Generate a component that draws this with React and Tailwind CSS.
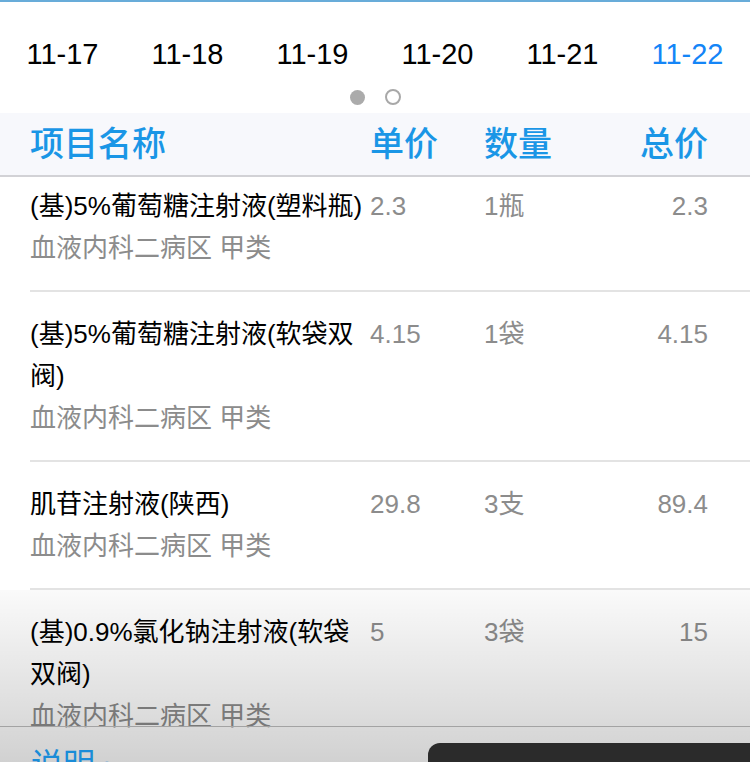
import React from 'react';

const dates = ['11-17', '11-18', '11-19', '11-20', '11-21', '11-22'];

const items = [
  { name: '(基)5%葡萄糖注射液(塑料瓶)', price: '2.3', qty: '1瓶', total: '2.3' },
  { name: '(基)5%葡萄糖注射液(软袋双阀)', price: '4.15', qty: '1袋', total: '4.15' },
  { name: '肌苷注射液(陕西)', price: '29.8', qty: '3支', total: '89.4' },
  { name: '(基)0.9%氯化钠注射液(软袋双阀)', price: '5', qty: '3袋', total: '15' },
];

const App = () => {
  return (
    <div className="relative h-[762px] w-[750px] overflow-hidden bg-white font-['Liberation_Sans','Noto_Sans_CJK_SC',sans-serif]">
      <div className="h-[2px] bg-[#68acd9]" />

      {/* date tabs */}
      <div className="flex pt-[30px]">
        {dates.map((d, i) => (
          <div
            key={d}
            className={`w-[125px] text-center text-[29px] leading-[44px] ${i === dates.length - 1 ? 'text-[#1485f7]' : 'text-black'}`}
          >
            {d}
          </div>
        ))}
      </div>

      {/* pager dots */}
      <div className="mt-[13px] mb-[8px] flex h-[16px] items-center justify-center gap-[20px]">
        <div className="h-[15px] w-[15px] rounded-full bg-[#ababab]" />
        <div className="h-[16px] w-[16px] rounded-full border-2 border-[#a8a8a8] bg-white" />
      </div>

      {/* table header */}
      <div className="grid h-[64px] grid-cols-[340px_114px_1fr_auto] items-center border-b-2 border-[#d2d2d6] bg-[#f7f8fc] pl-[30px] pr-[42px] text-[34px] font-medium text-[#1a96e6]">
        <div>项目名称</div>
        <div>单价</div>
        <div>数量</div>
        <div>总价</div>
      </div>

      {/* rows */}
      <div>
        {items.map((it, i) => (
          <div
            key={i}
            className={`ml-[30px] grid grid-cols-[340px_114px_1fr_auto] pr-[42px] pb-[21px] ${i === 0 ? 'pt-[8px]' : 'border-t-2 border-[#e3e3e3] pt-[21px]'}`}
          >
            <div>
              <div className="text-[26px] leading-[42px] text-black">{it.name}</div>
              <div className="text-[26px] leading-[42px] text-[#8c8c8c]">血液内科二病区 甲类</div>
            </div>
            <div className="text-[26px] leading-[42px] text-[#8c8c8c]">{it.price}</div>
            <div className="text-[26px] leading-[42px] text-[#8c8c8c]">{it.qty}</div>
            <div className="text-right text-[26px] leading-[42px] text-[#8c8c8c]">{it.total}</div>
          </div>
        ))}
      </div>

      {/* bottom fade */}
      <div className="pointer-events-none absolute inset-x-0 top-[590px] bottom-0 bg-gradient-to-b from-black/[0.02] to-black/[0.18]" />

      {/* bottom bar */}
      <div className="absolute inset-x-0 top-[726px] bottom-0 flex border-t border-[#a3a3a3]">
        <div className="flex-1 pl-[31px] pt-[18px] text-[32px] leading-[40px] text-[#1a8cd8]">说明 ›</div>
        <div className="mt-[16px] w-[322px] rounded-tl-[12px] bg-[#2b2b2b]" />
      </div>
    </div>
  );
};

export default App;
